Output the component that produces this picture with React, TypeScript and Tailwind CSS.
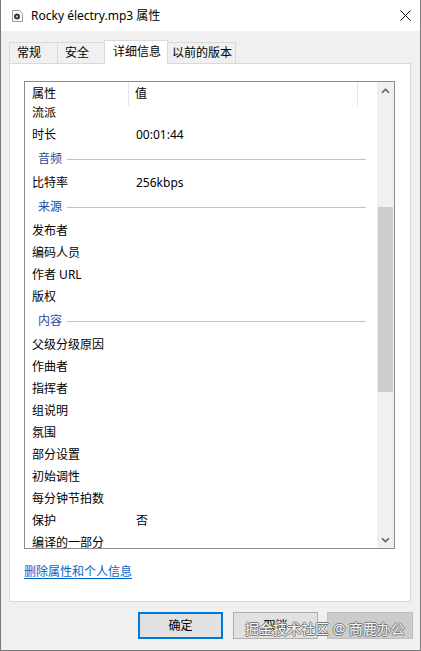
import React from "react";

type Item =
  | { kind: "row"; name: string; value?: string }
  | { kind: "group"; name: string };

const ITEMS: Item[] = [
  { kind: "row", name: "流派" },
  { kind: "row", name: "时长", value: "00:01:44" },
  { kind: "group", name: "音频" },
  { kind: "row", name: "比特率", value: "256kbps" },
  { kind: "group", name: "来源" },
  { kind: "row", name: "发布者" },
  { kind: "row", name: "编码人员" },
  { kind: "row", name: "作者 URL" },
  { kind: "row", name: "版权" },
  { kind: "group", name: "内容" },
  { kind: "row", name: "父级分级原因" },
  { kind: "row", name: "作曲者" },
  { kind: "row", name: "指挥者" },
  { kind: "row", name: "组说明" },
  { kind: "row", name: "氛围" },
  { kind: "row", name: "部分设置" },
  { kind: "row", name: "初始调性" },
  { kind: "row", name: "每分钟节拍数" },
  { kind: "row", name: "保护", value: "否" },
  { kind: "row", name: "编译的一部分" },
];

function FileIcon() {
  return (
    <svg width="11" height="12" viewBox="0 0 11 12" className="shrink-0">
      <path d="M0.5 0.5 H7.5 L10.5 3.5 V11.5 H0.5 Z" fill="#fff" stroke="#9a9a9a" />
      <circle cx="5" cy="6.5" r="3" fill="#3a3a3a" />
      <circle cx="5" cy="6.5" r="1" fill="#d8d8d8" />
    </svg>
  );
}

function CloseIcon() {
  return (
    <svg width="11" height="11" viewBox="0 0 11 11" className="shrink-0">
      <path d="M0.5 0.5 L10.5 10.5 M10.5 0.5 L0.5 10.5" stroke="#111" strokeWidth="1" />
    </svg>
  );
}

function Chevron({ down }: { down?: boolean }) {
  return (
    <svg width="9" height="6" viewBox="0 0 9 6">
      <path
        d={down ? "M1 1.2 L4.5 4.6 L8 1.2" : "M1 4.8 L4.5 1.4 L8 4.8"}
        fill="none"
        stroke="#606060"
        strokeWidth="1.6"
      />
    </svg>
  );
}

function Tab({ label, className }: { label: string; className: string }) {
  return <div className={`flex items-center leading-[16px] border-[#d9d9d9] ${className}`}>{label}</div>;
}

function PropertyList() {
  return (
    <div className="w-[371px] h-[468px] border border-[#8c8c8c] bg-white flex">
      <div className="flex-1 flex flex-col min-w-0">
        <div className="h-[24px] shrink-0 flex relative z-10 bg-white">
          <div className="w-[104px] flex items-center pl-[7px] leading-[16px] border-r border-[#e5e5e5]">属性</div>
          <div className="w-[229px] flex items-center pl-[6px] leading-[16px] border-r border-[#e5e5e5]">值</div>
        </div>
        <div className="flex-1 overflow-hidden">
          <div className="-mt-[4px]">
            {ITEMS.map((it, i) =>
              it.kind === "group" ? (
                <div key={i} className="h-[26px] flex items-center pl-[13px] pr-[11px]">
                  <span className="text-[#1e4b9b] leading-[16px]">{it.name}</span>
                  <div className="flex-1 h-px bg-[#b7c3dc] ml-[5px]" />
                </div>
              ) : (
                <div key={i} className="h-[22px] flex items-center leading-[16px]">
                  <div className="w-[104px] pl-[7px] whitespace-nowrap">{it.name}</div>
                  <div className="pl-[7px] whitespace-nowrap">{it.value ?? ""}</div>
                </div>
              )
            )}
          </div>
        </div>
      </div>
      <div className="w-[17px] shrink-0 bg-[#f0f0f0] flex flex-col">
        <div className="h-[17px] flex items-center justify-center">
          <Chevron />
        </div>
        <div className="flex-1 relative">
          <div className="absolute left-px right-px top-[108px] h-[185px] bg-[#cdcdcd]" />
        </div>
        <div className="h-[17px] flex items-center justify-center">
          <Chevron down />
        </div>
      </div>
    </div>
  );
}

export default function App() {
  return (
    <div className="w-[421px] h-[651px] bg-[#f0f0f0] border-x border-b border-[#7a7a7a] flex flex-col text-[12px] text-black relative overflow-hidden font-['Noto_Sans','Noto_Sans_CJK_SC',sans-serif]">
      {/* title bar */}
      <div className="h-[31px] shrink-0 bg-white flex items-center">
        <div className="ml-[11px]">
          <FileIcon />
        </div>
        <span className="ml-[8px] leading-[16px]">Rocky électry.mp3 属性</span>
        <div className="ml-auto mr-[9px]">
          <CloseIcon />
        </div>
      </div>

      {/* tabs */}
      <div className="ml-[8px] mt-[9px] h-[23px] flex items-end">
        <Tab label="常规" className="h-[21px] w-[48px] pl-[7px] border-l border-t" />
        <Tab label="安全" className="h-[21px] w-[47px] pl-[7px] border-l border-t" />
        <Tab
          label="详细信息"
          className="h-[24px] w-[64px] pl-[8px] pb-[2px] border-l border-r border-t bg-white relative z-10 -mb-px"
        />
        <Tab label="以前的版本" className="h-[21px] w-[68px] pl-[4px] border-r border-t" />
      </div>

      {/* panel */}
      <div className="ml-[8px] w-[402px] h-[539px] shrink-0 bg-white border border-[#d9d9d9] pt-[17px] pl-[14px] flex flex-col">
        <PropertyList />
        <a className="mt-[15px] self-start leading-[16px] text-[#0066cc] underline underline-offset-2 cursor-pointer">
          删除属性和个人信息
        </a>
      </div>

      {/* buttons */}
      <div className="mt-[10px] pl-[137px] flex">
        <button className="w-[85px] h-[27px] bg-[#e1e1e1] border-2 border-[#0078d7] leading-[16px]">确定</button>
        <button className="ml-[10px] w-[85px] h-[27px] bg-[#e1e1e1] border border-[#adadad] leading-[16px]">取消</button>
        <button className="ml-[9px] w-[86px] h-[27px] bg-[#cccccc] border border-[#bfbfbf]" />
      </div>

      {/* watermark */}
      <div className="absolute left-[244px] top-[619px] text-[14px] leading-[20px] whitespace-nowrap text-[#f4f4f4] [text-shadow:1px_0_0_#7a7a7a,-1px_0_0_#7a7a7a,0_1px_0_#7a7a7a,0_-1px_0_#7a7a7a]">
        掘金技术社区 @ 商鹿办公
      </div>
    </div>
  );
}
